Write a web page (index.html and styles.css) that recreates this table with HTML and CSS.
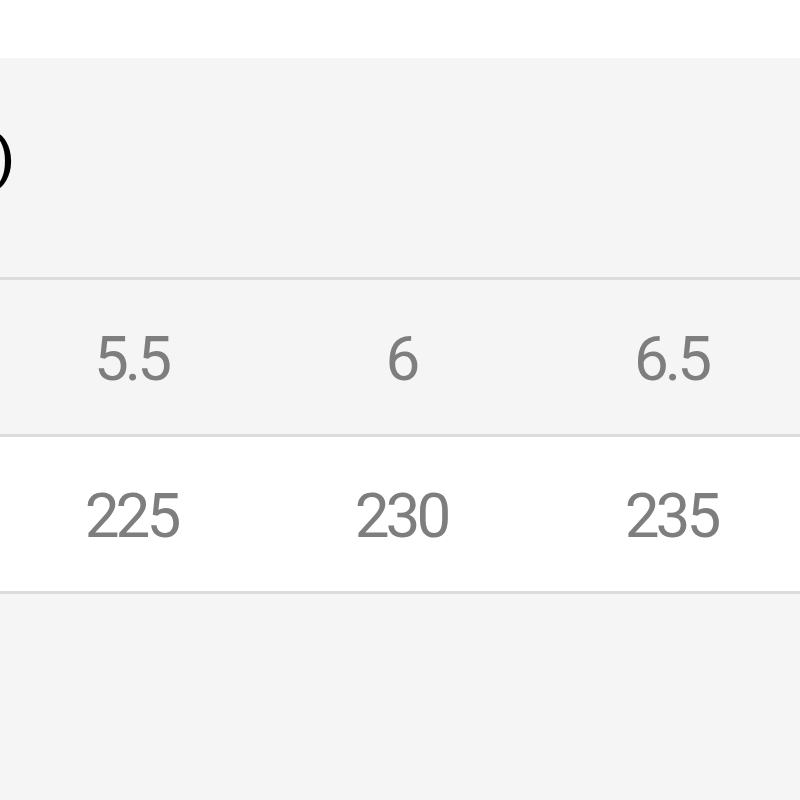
FILE: index.html
```html
<!DOCTYPE html>
<html>
<head>
<meta charset="utf-8">
<link rel="stylesheet" href="styles.css">
</head>
<body>
<div class="top"></div>
<div class="header"><span class="title">(mm)</span></div>
<div class="table">
  <div class="row row-alt">
    <div class="cell">5.5</div>
    <div class="cell">6</div>
    <div class="cell">6.5</div>
  </div>
  <div class="row row-white">
    <div class="cell">225</div>
    <div class="cell">230</div>
    <div class="cell">235</div>
  </div>
</div>
</body>
</html>
```
FILE: styles.css
```css
html, body {
  margin: 0;
  padding: 0;
  background: #f5f5f5;
  overflow: hidden;
}
body {
  width: 800px;
  height: 800px;
  font-family: Roboto, "Liberation Sans", sans-serif;
}
.top {
  height: 58px;
  background: #ffffff;
}
.header {
  height: 219px;
  display: flex;
  align-items: center;
  overflow: hidden;
}
.title {
  font-size: 56px;
  font-weight: 500;
  color: #000;
  margin-left: -122px;
  line-height: 1;
  margin-top: -20px;
}
.table {
  border-bottom: 3px solid #dcdcdc;
  margin-left: -2px;
  width: 810px;
}
.row {
  display: grid;
  grid-template-columns: 270px 270px 270px;
  height: 154px;
  border-top: 3px solid #dcdcdc;
  align-items: center;
}
.row-alt { background: #f5f5f5; }
.row-white { background: #ffffff; }
.cell {
  text-align: center;
  font-size: 62px;
  letter-spacing: -4px;
  text-indent: -4px;
  color: #7e7e7e;
  line-height: 1;
  padding-top: 3px;
}
```
